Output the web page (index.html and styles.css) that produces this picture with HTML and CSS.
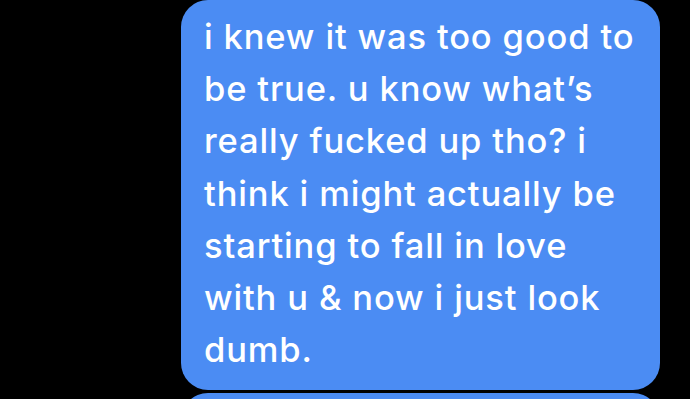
FILE: index.html
```html
<!DOCTYPE html>
<html>
<head>
<meta charset="utf-8">
<link rel="stylesheet" href="styles.css">
</head>
<body>
<div class="thread">
  <div class="bubble">
    <p class="msg">i knew it was too good to<br>be true. u know what’s<br>really fucked up tho? i<br>think i might actually be<br>starting to fall in love<br>with u &amp; now i just look<br>dumb.</p>
  </div>
  <div class="bubble next"></div>
</div>
</body>
</html>
```

FILE: styles.css
```css
html, body {
  margin: 0;
  padding: 0;
  background: #000;
  height: 100%;
  overflow: hidden;
}
.thread {
  display: flex;
  flex-direction: column;
  align-items: flex-start;
  gap: 3px;
  padding-left: 181px;
}
.bubble {
  width: 479px;
  background: #4b8cf3;
  border-radius: 27px;
  box-sizing: border-box;
  padding: 11px 18px 14px 23px;
}
.msg {
  margin: 0;
  color: #fff;
  font-family: Inter, "Open Sans", sans-serif;
  font-weight: 500;
  font-size: 34.5px;
  line-height: 52.2px;
  letter-spacing: 0.85px;
}
.bubble.next {
  height: 60px;
}
```
